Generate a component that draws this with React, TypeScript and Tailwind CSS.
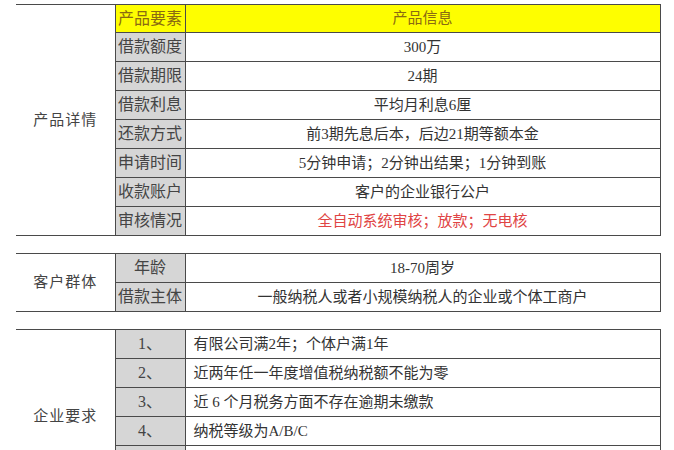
const font = { fontFamily: '"Liberation Serif", "Noto Sans CJK SC", serif' };

const detailRows = [
  ["借款额度", "300万"],
  ["借款期限", "24期"],
  ["借款利息", "平均月利息6厘"],
  ["还款方式", "前3期先息后本，后边21期等额本金"],
  ["申请时间", "5分钟申请；2分钟出结果；1分钟到账"],
  ["收款账户", "客户的企业银行公户"],
];

const customerRows = [
  ["年龄", "18-70周岁"],
  ["借款主体", "一般纳税人或者小规模纳税人的企业或个体工商户"],
];

// rows 5 and 6 fall below the visible area
const companyRows = [
  ["1、", "有限公司满2年；个体户满1年"],
  ["2、", "近两年任一年度增值税纳税额不能为零"],
  ["3、", "近 6 个月税务方面不存在逾期未缴款"],
  ["4、", "纳税等级为A/B/C"],
  ["", ""],
  ["", ""],
];

const cellLabel = "h-[29px] border border-[#4a4a4a] bg-[#d6d6d6] text-center text-[#444] text-[16px] leading-none whitespace-nowrap";
const cellValue = "h-[29px] border border-[#4a4a4a] text-[#333] text-[15px] leading-none whitespace-nowrap";
const groupCell = "border-y border-[#4a4a4a] text-center text-[15px] text-[#444] tracking-[1px]";

function Section({ children }: { children: React.ReactNode }) {
  return (
    <table className="border-collapse table-fixed w-[644px]">
      <colgroup>
        <col className="w-[99px]" />
        <col className="w-[70px]" />
        <col className="w-[475px]" />
      </colgroup>
      <tbody>{children}</tbody>
    </table>
  );
}

export default function App() {
  return (
    <div className="w-[674px] h-[450px] overflow-hidden bg-white pl-4 pt-1" style={font}>
      <div className="flex flex-col gap-[17px]">
        <Section>
          <tr>
            <td rowSpan={8} className={groupCell}>产品详情</td>
            <td className="h-[28px] border border-[#4a4a4a] bg-[#fefe00] text-center text-[#8a6a12] text-[16px] leading-none">产品要素</td>
            <td className="h-[28px] border border-[#4a4a4a] bg-[#fefe00] text-center text-[#8a6a12] text-[15px] leading-none">产品信息</td>
          </tr>
          {detailRows.map(([k, v]) => (
            <tr key={k}>
              <td className={cellLabel}>{k}</td>
              <td className={`${cellValue} text-center`}>{v}</td>
            </tr>
          ))}
          <tr>
            <td className={cellLabel}>审核情况</td>
            <td className={`${cellValue} text-center text-[#e04444]`}>全自动系统审核；放款；无电核</td>
          </tr>
        </Section>

        <Section>
          {customerRows.map(([k, v], i) => (
            <tr key={k}>
              {i === 0 && <td rowSpan={2} className={groupCell}>客户群体</td>}
              <td className={cellLabel}>{k}</td>
              <td className={`${cellValue} text-center`}>{v}</td>
            </tr>
          ))}
        </Section>

        <Section>
          {companyRows.map(([k, v], i) => (
            <tr key={i}>
              {i === 0 && <td rowSpan={6} className={groupCell}>企业要求</td>}
              <td className={`${cellLabel} text-[15px]`}>{k}</td>
              <td className={`${cellValue} text-left pl-2`}>{v}</td>
            </tr>
          ))}
        </Section>
      </div>
    </div>
  );
}
